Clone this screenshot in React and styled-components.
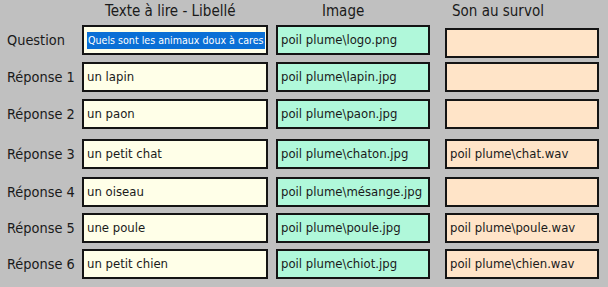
import React from "react";
import styled, { createGlobalStyle } from "styled-components";

const Global = createGlobalStyle`
  html, body { margin: 0; padding: 0; background: #c0c0c0; }
  body { width: 608px; height: 287px; overflow: hidden; font-family: "DejaVu Sans Condensed", "DejaVu Sans", sans-serif; color: #1a1a1a; }
`;

const Form = styled.div`
  display: grid;
  grid-template-columns: 82px 194px 169px 154px;
  grid-template-rows: 25px 37px 37px 40px 38px 36px 36px 38px;
  width: 608px;
  height: 287px;
`;

const Header = styled.div`
  font-size: 15px;
  line-height: 22px;
  padding-left: ${(p) => p.$pad}px;
  white-space: nowrap;
`;

const Label = styled.div`
  font-size: 14.4px;
  height: 30px;
  line-height: 30px;
  padding-left: 7px;
  white-space: nowrap;
`;

const Field = styled.div`
  box-sizing: border-box;
  width: ${(p) => p.$w}px;
  height: 30px;
  margin-top: ${(p) => p.$top || 0}px;
  border: 2px solid #141414;
  background: ${(p) => p.$bg};
  padding-left: 3px;
  font-size: 13px;
  line-height: 26px;
  white-space: nowrap;
  overflow: hidden;
`;

const Selected = styled.span`
  background: #0a6fd6;
  color: #ffffff;
  font-size: 10.6px;
  line-height: 17px;
  display: inline-block;
  vertical-align: middle;
  padding: 0 1px;
`;

const CREAM = "#ffffe8";
const MINT = "#b0f8da";
const PEACH = "#ffe4c8";

const rows = [
  { label: "Question", text: null, image: "poil plume\\logo.png", sound: "" },
  { label: "Réponse 1", text: "un lapin", image: "poil plume\\lapin.jpg", sound: "" },
  { label: "Réponse 2", text: "un paon", image: "poil plume\\paon.jpg", sound: "" },
  { label: "Réponse 3", text: "un petit chat", image: "poil plume\\chaton.jpg", sound: "poil plume\\chat.wav" },
  { label: "Réponse 4", text: "un oiseau", image: "poil plume\\mésange.jpg", sound: "" },
  { label: "Réponse 5", text: "une poule", image: "poil plume\\poule.jpg", sound: "poil plume\\poule.wav" },
  { label: "Réponse 6", text: "un petit chien", image: "poil plume\\chiot.jpg", sound: "poil plume\\chien.wav" },
];

export default function App() {
  return (
    <>
      <Global />
      <Form>
        <div />
        <Header $pad={23}>Texte à lire - Libellé</Header>
        <Header $pad={46}>Image</Header>
        <Header $pad={7}>Son au survol</Header>
        {rows.map((r, i) => (
          <React.Fragment key={r.label}>
            <Label>{r.label}</Label>
            <Field $w={186} $bg={CREAM}>
              {r.text === null ? <Selected>Quels sont les animaux doux à cares</Selected> : r.text}
            </Field>
            <Field $w={154} $bg={MINT}>{r.image}</Field>
            <Field $w={154} $bg={PEACH} $top={i === 0 ? 3 : 0}>{r.sound}</Field>
          </React.Fragment>
        ))}
        <div />
      </Form>
    </>
  );
}
